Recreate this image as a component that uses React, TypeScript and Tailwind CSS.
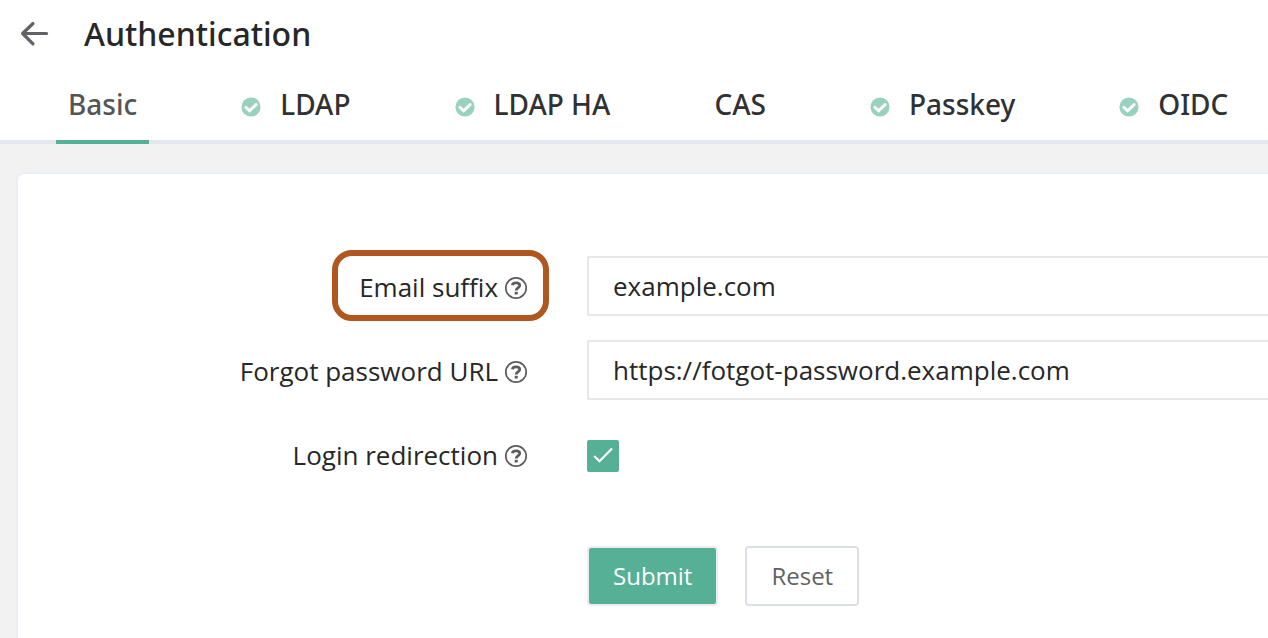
import { useState } from "react";
import type { ReactNode } from "react";

const tabs = [
  { name: "Basic", enabled: false },
  { name: "LDAP", enabled: true },
  { name: "LDAP HA", enabled: true },
  { name: "CAS", enabled: false },
  { name: "Passkey", enabled: true },
  { name: "OIDC", enabled: true },
];

function EnabledIcon() {
  return (
    <svg viewBox="0 0 20 20" className="mt-1.5 size-5 shrink-0" aria-hidden="true">
      <circle cx="10" cy="10" r="9.6" fill="#98d1bf" />
      <path
        d="M4.9 10.3l3.7 3.5 6.5-6.2"
        fill="none"
        stroke="#fff"
        strokeWidth="3"
        strokeLinecap="round"
        strokeLinejoin="miter"
      />
    </svg>
  );
}

function HelpIcon() {
  return (
    <svg viewBox="0 0 24 24" className="mt-0.5 size-6 shrink-0 text-[#5c5c5c]" aria-hidden="true">
      <circle cx="12" cy="12" r="10.2" fill="none" stroke="currentColor" strokeWidth="1.7" />
      <path
        d="M8.3 9.2C8.7 7.5 10.1 6.8 12 6.8c2.3 0 3.7 1.1 3.7 2.8 0 2.4-3.5 2.3-3.5 4.9"
        fill="none"
        stroke="currentColor"
        strokeWidth="2.8"
      />
      <rect x="10.7" y="15.8" width="3" height="2.7" fill="currentColor" />
    </svg>
  );
}

function Field({
  id,
  label,
  highlighted = false,
  children,
}: {
  id: string;
  label: string;
  highlighted?: boolean;
  children: ReactNode;
}) {
  return (
    <div className="flex h-[60px] items-center">
      <div className="flex w-[569px] shrink-0 justify-end pt-0.5 pr-[59px]">
        <label htmlFor={id} className="relative flex items-center gap-1.5 leading-9 whitespace-nowrap">
          {highlighted && (
            <span className="pointer-events-none absolute -top-[19px] -right-[21px] -bottom-4 -left-[27px] rounded-[20px] border-6 border-[#b0561f]" />
          )}
          <span>{label}</span>
          <HelpIcon />
        </label>
      </div>
      {children}
    </div>
  );
}

const inputClass =
  "h-[60px] min-w-0 flex-1 rounded-l-xs border-2 border-r-0 border-[#e5e7e9] bg-white px-6 text-[#272727] outline-none";

export default function App() {
  const [active, setActive] = useState("Basic");
  const [redirect, setRedirect] = useState(true);

  return (
    <div className="flex min-h-screen flex-col overflow-x-hidden bg-[#f2f2f2] font-['Open_Sans','Noto_Sans',sans-serif] text-[26px] text-[#272727]">
      <header className="bg-white font-['Noto_Sans','Open_Sans',sans-serif] font-medium">
        <div className="flex h-[68px] items-center gap-[34px] pl-5">
          <button type="button" aria-label="Back">
            <svg viewBox="0 0 30 26" className="h-[26px] w-[30px]" aria-hidden="true">
              <path
                d="M26.6 12.5H3M13 2.5L2.6 12.5 13 22.8"
                fill="none"
                stroke="#606266"
                strokeWidth="3.2"
                strokeLinecap="round"
                strokeLinejoin="round"
              />
            </svg>
          </button>
          <h1 className="text-[32px] leading-10">Authentication</h1>
        </div>
        <nav className="flex h-[76px] gap-20 border-b-4 border-[#e4e7ed] pl-14">
          {tabs.map((tab) => (
            <button
              key={tab.name}
              type="button"
              onClick={() => setActive(tab.name)}
              className={`-mb-1 flex shrink-0 items-center gap-[19px] border-b-4 px-3 text-[28px] leading-10 whitespace-nowrap ${
                active === tab.name ? "border-[#55b095] text-[#555555]" : "border-transparent text-[#303133]"
              }`}
            >
              {tab.enabled && <EnabledIcon />}
              {tab.name}
            </button>
          ))}
        </nav>
      </header>
      <main className="flex flex-1 flex-col pt-7 pl-4">
        <form
          onSubmit={(event) => event.preventDefault()}
          className="flex flex-1 flex-col gap-6 rounded-tl-lg border-t-2 border-l-2 border-[#ebeef5] bg-white pt-[82px] pb-8"
        >
          <Field id="suffix" label="Email suffix" highlighted>
            <input id="suffix" type="text" defaultValue="example.com" className={inputClass} />
          </Field>
          <Field id="forgot" label="Forgot password URL">
            <input
              id="forgot"
              type="text"
              defaultValue="https://fotgot-password.example.com"
              className={inputClass}
            />
          </Field>
          <Field id="redirect" label="Login redirection">
            <span className="grid pt-1">
              <input
                id="redirect"
                type="checkbox"
                checked={redirect}
                onChange={(event) => setRedirect(event.target.checked)}
                className="peer col-start-1 row-start-1 size-8 appearance-none rounded-xs border-2 border-[#dcdfe6] checked:border-[#55b095] checked:bg-[#55b095]"
              />
              <svg
                viewBox="0 0 32 32"
                className="pointer-events-none col-start-1 row-start-1 size-8 opacity-0 peer-checked:opacity-100"
                aria-hidden="true"
              >
                <path d="M7.2 16l5.3 5.2L25 8.6" fill="none" stroke="#fff" strokeWidth="2.2" />
              </svg>
            </span>
          </Field>
          <div className="flex gap-[27px] pt-[38px] pl-[569px] text-[24px]">
            <button
              type="submit"
              className="h-[60px] rounded-sm border-2 border-[#ebeef0] bg-[#55b095] px-6 text-white"
            >
              Submit
            </button>
            <button
              type="button"
              className="h-[60px] rounded-sm border-2 border-[#dcdfe6] bg-white px-6 text-[#606266]"
            >
              Reset
            </button>
          </div>
        </form>
      </main>
    </div>
  );
}
